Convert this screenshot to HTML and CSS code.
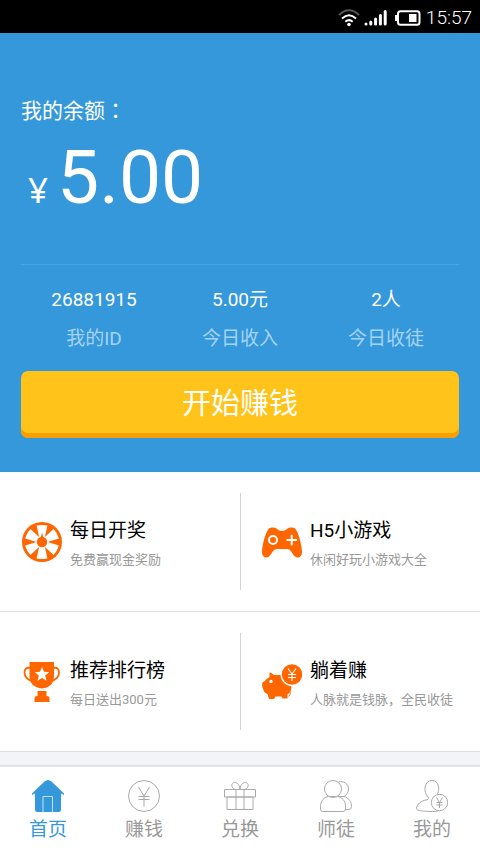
FILE: index.html
```html
<!DOCTYPE html>
<html lang="zh-CN">
<head>
<meta charset="utf-8">
<meta name="viewport" content="width=device-width, initial-scale=1">
<title>首页</title>
<link rel="stylesheet" href="styles.css">
</head>
<body>
<div class="status">
  <svg class="status-wifi" viewBox="0 0 22 18" aria-hidden="true">
    <path d="M1 6Q11-3.500 21 6" stroke="#555"/>
    <path d="M4 9.500Q11 3 18 9.500M7.300 12.800Q11 9.500 14.700 12.800" stroke="#fff"/>
    <circle cx="11" cy="15.500" r="1.800" fill="#fff"/>
  </svg>
  <svg class="status-signal" viewBox="0 0 23 16" aria-hidden="true">
    <path d="M2 14v0M6.800 12v2M11.600 9v5M16.400 5.500v8.500M21.200 1.500v12.500"/>
  </svg>
  <svg class="status-battery" viewBox="0 0 26 16" aria-hidden="true">
    <rect x="3" y="1.200" width="21.500" height="13.500" rx="2.500" fill="none" stroke="#fff" stroke-width="2"/>
    <path d="M0 5h3v6H0zM14 4h7.500v8H14z" fill="#fff"/>
  </svg>
  <time>15:57</time>
</div>

<main>
  <section class="hero">
    <div class="balance">
      <p class="balance-label">我的余额<span class="colon" lang="zh-TW">：</span></p>
      <p class="balance-amount"><span class="currency">¥</span>5.00</p>
    </div>
    <dl class="stats">
      <div><dt>我的ID</dt><dd>26881915</dd></div>
      <div><dt>今日收入</dt><dd>5.00元</dd></div>
      <div><dt>今日收徒</dt><dd>2人</dd></div>
    </dl>
    <button class="start" type="button">开始赚钱</button>
  </section>

  <ul class="features">
    <li><a href="#draw">
      <svg viewBox="0 0 40 40" aria-hidden="true">
        <circle cx="20" cy="20" r="20"/>
        <g fill="#fff">
          <path id="spoke" d="M14.600 3.600Q20 2.200 25.400 3.600L23 14.500H17Z"/>
          <use href="#spoke" transform="rotate(60 20 20)"/>
          <use href="#spoke" transform="rotate(120 20 20)"/>
          <use href="#spoke" transform="rotate(180 20 20)"/>
          <use href="#spoke" transform="rotate(240 20 20)"/>
          <use href="#spoke" transform="rotate(300 20 20)"/>
          <circle cx="20" cy="20" r="6.400"/>
        </g>
        <circle cx="20" cy="20" r="5.200"/>
        <path d="M20 10.500l1.300 5h-2.600z"/>
      </svg>
      <span class="feature-text"><strong>每日开奖</strong><small>免费赢现金奖励</small></span>
    </a></li>
    <li><a href="#games">
      <svg viewBox="0 0 40 40" aria-hidden="true">
        <path d="M7 6.500C9 5 13 5 15 7Q17 9 20 9T25 7C27 5 31 5 33 6.500C36 9 40 23 40 30C40 35 36 37 33 34.500C30 32 29 27 25 27H15C11 27 10 32 7 34.500C4 37 0 35 0 30C0 23 4 9 7 6.500Z"/>
        <circle cx="11" cy="18" r="4" fill="none" stroke="#fff" stroke-width="2"/>
        <path d="M24.500 18h10.500M29.700 12.800v10.500" stroke="#fff" stroke-width="2"/>
      </svg>
      <span class="feature-text"><strong>H5小游戏</strong><small>休闲好玩小游戏大全</small></span>
    </a></li>
    <li><a href="#ranking">
      <svg viewBox="0 0 40 40" aria-hidden="true">
        <path d="M7.500 0H32v14Q32 25 20 26.500Q7.500 25 7.500 14ZM15.500 29h9v5h-9zM12.500 40v-3.500q0-2.500 2.500-2.500h10q2.500 0 2.500 2.500V40z"/>
        <path d="M8.500 6C4.500 5 2.500 7 2.500 10.500C2.500 14.500 5.500 18 10 18.500M31 6C35 5 37 7 37 10.500C37 14.500 34 18 29.500 18.500" fill="none" stroke="#f60" stroke-width="1.800"/>
        <path fill="#fff" d="M20 5l2 4.800 5.200.4-4 3.400 1.300 5.100-4.500-2.800-4.500 2.800 1.300-5.100-4-3.400 5.200-.4z"/>
      </svg>
      <span class="feature-text"><strong>推荐排行榜</strong><small>每日送出300元</small></span>
    </a></li>
    <li><a href="#passive">
      <svg viewBox="0 0 40 40" aria-hidden="true">
        <path d="M7.500 10.500Q9 10 12 13H20L29 23Q30 28 27.500 31L25.500 32V36.500H20.500L19.500 34.500H13.500L12 37H7L5.500 32Q2 31 1 26.500Q-.5 24 .5 20.500Q3 19.500 4 17.500L7.500 15Z"/>
        <circle cx="30" cy="12.500" r="11.500" fill="#fff"/>
        <circle cx="30" cy="12.500" r="10.200"/>
        <circle cx="9" cy="19.500" r="1.700" fill="#fff"/>
        <path d="M26 6.500l4 5.500 4-5.500M30 12v7M26 12.500h8M26 15.500h8" fill="none" stroke="#fff" stroke-width="1.100"/>
        <path d="M26.500 34.500q2.500-1.500 1.500-5" fill="none" stroke="#f60"/>
      </svg>
      <span class="feature-text"><strong>躺着赚</strong><small>人脉就是钱脉，全民收徒</small></span>
    </a></li>
  </ul>
</main>

<nav class="tabs">
  <a class="active" href="#home" aria-current="page">
    <svg viewBox="0 0 32 32" aria-hidden="true">
      <path fill="#3498db" stroke="none" d="M0 13.500L12.500 1.500Q16-1.500 19.500 1.500L32 13.500V15L29 13.500V29.500Q29 32 26.500 32H5.500Q3 32 3 29.500V13.500L0 15Z"/>
      <path stroke="#c4e2f6" d="M11 32V16.500h9.500V32"/>
    </svg>
    首页</a>
  <a href="#earn">
    <svg viewBox="0 0 32 32" aria-hidden="true">
      <circle cx="16" cy="16" r="15.500"/>
      <path d="M10.500 7l5.500 9 5.500-9M16 16v10.500M10.500 16.500h11M10.500 19.500h11"/>
    </svg>
    赚钱</a>
  <a href="#redeem">
    <svg viewBox="0 0 32 32" aria-hidden="true">
      <path d="M.5 9.500h31v7.500H.5zM3 17h26v12.500H3zM12 9.500v20M20 9.500v20"/>
      <path d="M16 9.500H12C7 9 6.500 2.500 10.500 2.500C14 2.500 16 6 16 9.500C16 6 18 2.500 21.500 2.500C25.500 2.500 25 9 20 9.500"/>
    </svg>
    兑换</a>
  <a href="#team">
    <svg viewBox="0 0 32 32" aria-hidden="true">
      <circle cx="13" cy="9" r="8.500"/>
      <path d="M.5 29V25.500C1 20.500 4.500 16.800 8.500 16.500H17.500C22 17 25.500 21 25.500 26V29Q25.500 31.500 23 31.500H3Q.5 31.500.5 29Z"/>
      <path d="M18.500 2C24 .5 28.500 4 28.500 9C28.500 12.500 26.500 15 24 16.500C29 18 31.500 22 31.500 26.500Q31.500 29.500 29 29.500H25.500M18.500 16.500H24"/>
    </svg>
    师徒</a>
  <a href="#me">
    <svg viewBox="0 0 32 32" aria-hidden="true">
      <path d="M22 31Q17 32 11 31.300C4 31 .5 30.500.5 28.500C.5 24.500 5 20.500 11 19.800Q13.500 19 12 17C7 12 8 .5 16 .5C22.500.5 24 8 21.500 14"/>
      <circle cx="23.500" cy="22.500" r="8.200"/>
      <path d="M20.500 17.500l3 5 3-5M23.500 22.500v5.500M20.500 22.500h6M20.500 25h6"/>
    </svg>
    我的</a>
</nav>
</body>
</html>
```
FILE: styles.css
```css
* {
  box-sizing: border-box;
}

body {
  margin: 0;
  min-height: 100vh;
  display: flex;
  flex-direction: column;
  background: #f2f4f8;
  color: #000;
  font-family: Roboto, "Noto Sans CJK SC", sans-serif;
  font-size: 19px;
}

p, dl, dd, ul {
  margin: 0;
  padding: 0;
}

a {
  color: inherit;
  text-decoration: none;
}

.status {
  display: flex;
  align-items: center;
  justify-content: flex-end;
  padding: 2px 8px 0 0;
  height: 33px;
  background: #000;
  color: #fff;
  font-weight: 300;
}

.status svg {
  fill: none;
  stroke-width: 2;
}

.status-wifi {
  width: 22px;
  height: 18px;
  margin-right: 4px;
}

.status-signal {
  width: 23px;
  height: 16px;
  margin-right: 8px;
  stroke: #fff;
  stroke-linecap: round;
}

.status .status-signal {
  stroke-width: 3;
}

.status-battery {
  width: 26px;
  height: 16px;
  margin-right: 5px;
}

.hero {
  padding: 61px 21px 34px;
  background: #3498db;
  color: #fff;
}

.balance {
  padding-bottom: 42px;
  border-bottom: 1px solid #42a5e6;
}

.balance-label {
  font-size: 21px;
  line-height: 30px;
}

.colon {
  font-family: "Noto Sans CJK TC", sans-serif;
}

.balance-amount {
  margin-top: 6px;
  padding-left: 7px;
  font-size: 75px;
  line-height: 90px;
}

.currency {
  margin-right: 9px;
  font-family: "Noto Sans", sans-serif;
  font-size: 35px;
  line-height: 1;
}

.stats {
  display: grid;
  grid-template-columns: repeat(3, 1fr);
  padding: 20px 0 17px;
  line-height: 30px;
  text-align: center;
}

.stats div {
  display: flex;
  flex-direction: column-reverse;
  gap: 9px;
}

.stats dt {
  color: #a6d3f3;
}

.start {
  display: block;
  width: 100%;
  padding: 11px 0 12px;
  border: 0;
  border-radius: 7px;
  background: #ffc31a;
  box-shadow: inset 0 -5px #f5a000;
  color: #fff;
  font: inherit;
  font-size: 29px;
  line-height: 44px;
}

.features {
  display: grid;
  grid-template-columns: 1fr 1fr;
  background: #fff;
  list-style: none;
}

.features li {
  padding: 21px 0;
  border-bottom: 1px solid #dcdfe2;
}

.features a {
  display: flex;
  align-items: center;
  gap: 8px;
  height: 97px;
  padding-left: 21px;
  border-left: 1px solid transparent;
}

.features li:nth-child(even) a {
  border-color: #d4d4d4;
}

.features svg {
  flex: none;
  width: 40px;
  height: 40px;
  fill: #f60;
}

.feature-text {
  display: flex;
  flex-direction: column;
  gap: 5px;
  padding-top: 3px;
  white-space: nowrap;
}

.features strong {
  font-weight: 400;
  line-height: 28px;
}

.features small {
  color: #999;
  font-size: 13px;
  line-height: 20px;
}

.tabs {
  display: grid;
  grid-template-columns: repeat(5, 1fr);
  margin-top: auto;
  padding: 13px 0 11px;
  border-top: 2px solid #dfe3e6;
  background: #fff;
  color: #999;
  line-height: 24px;
}

.tabs a {
  display: flex;
  flex-direction: column;
  align-items: center;
  gap: 6px;
}

.tabs .active {
  color: #3498db;
}

.tabs svg {
  width: 32px;
  height: 32px;
  fill: none;
  stroke: #aaa;
}
```
